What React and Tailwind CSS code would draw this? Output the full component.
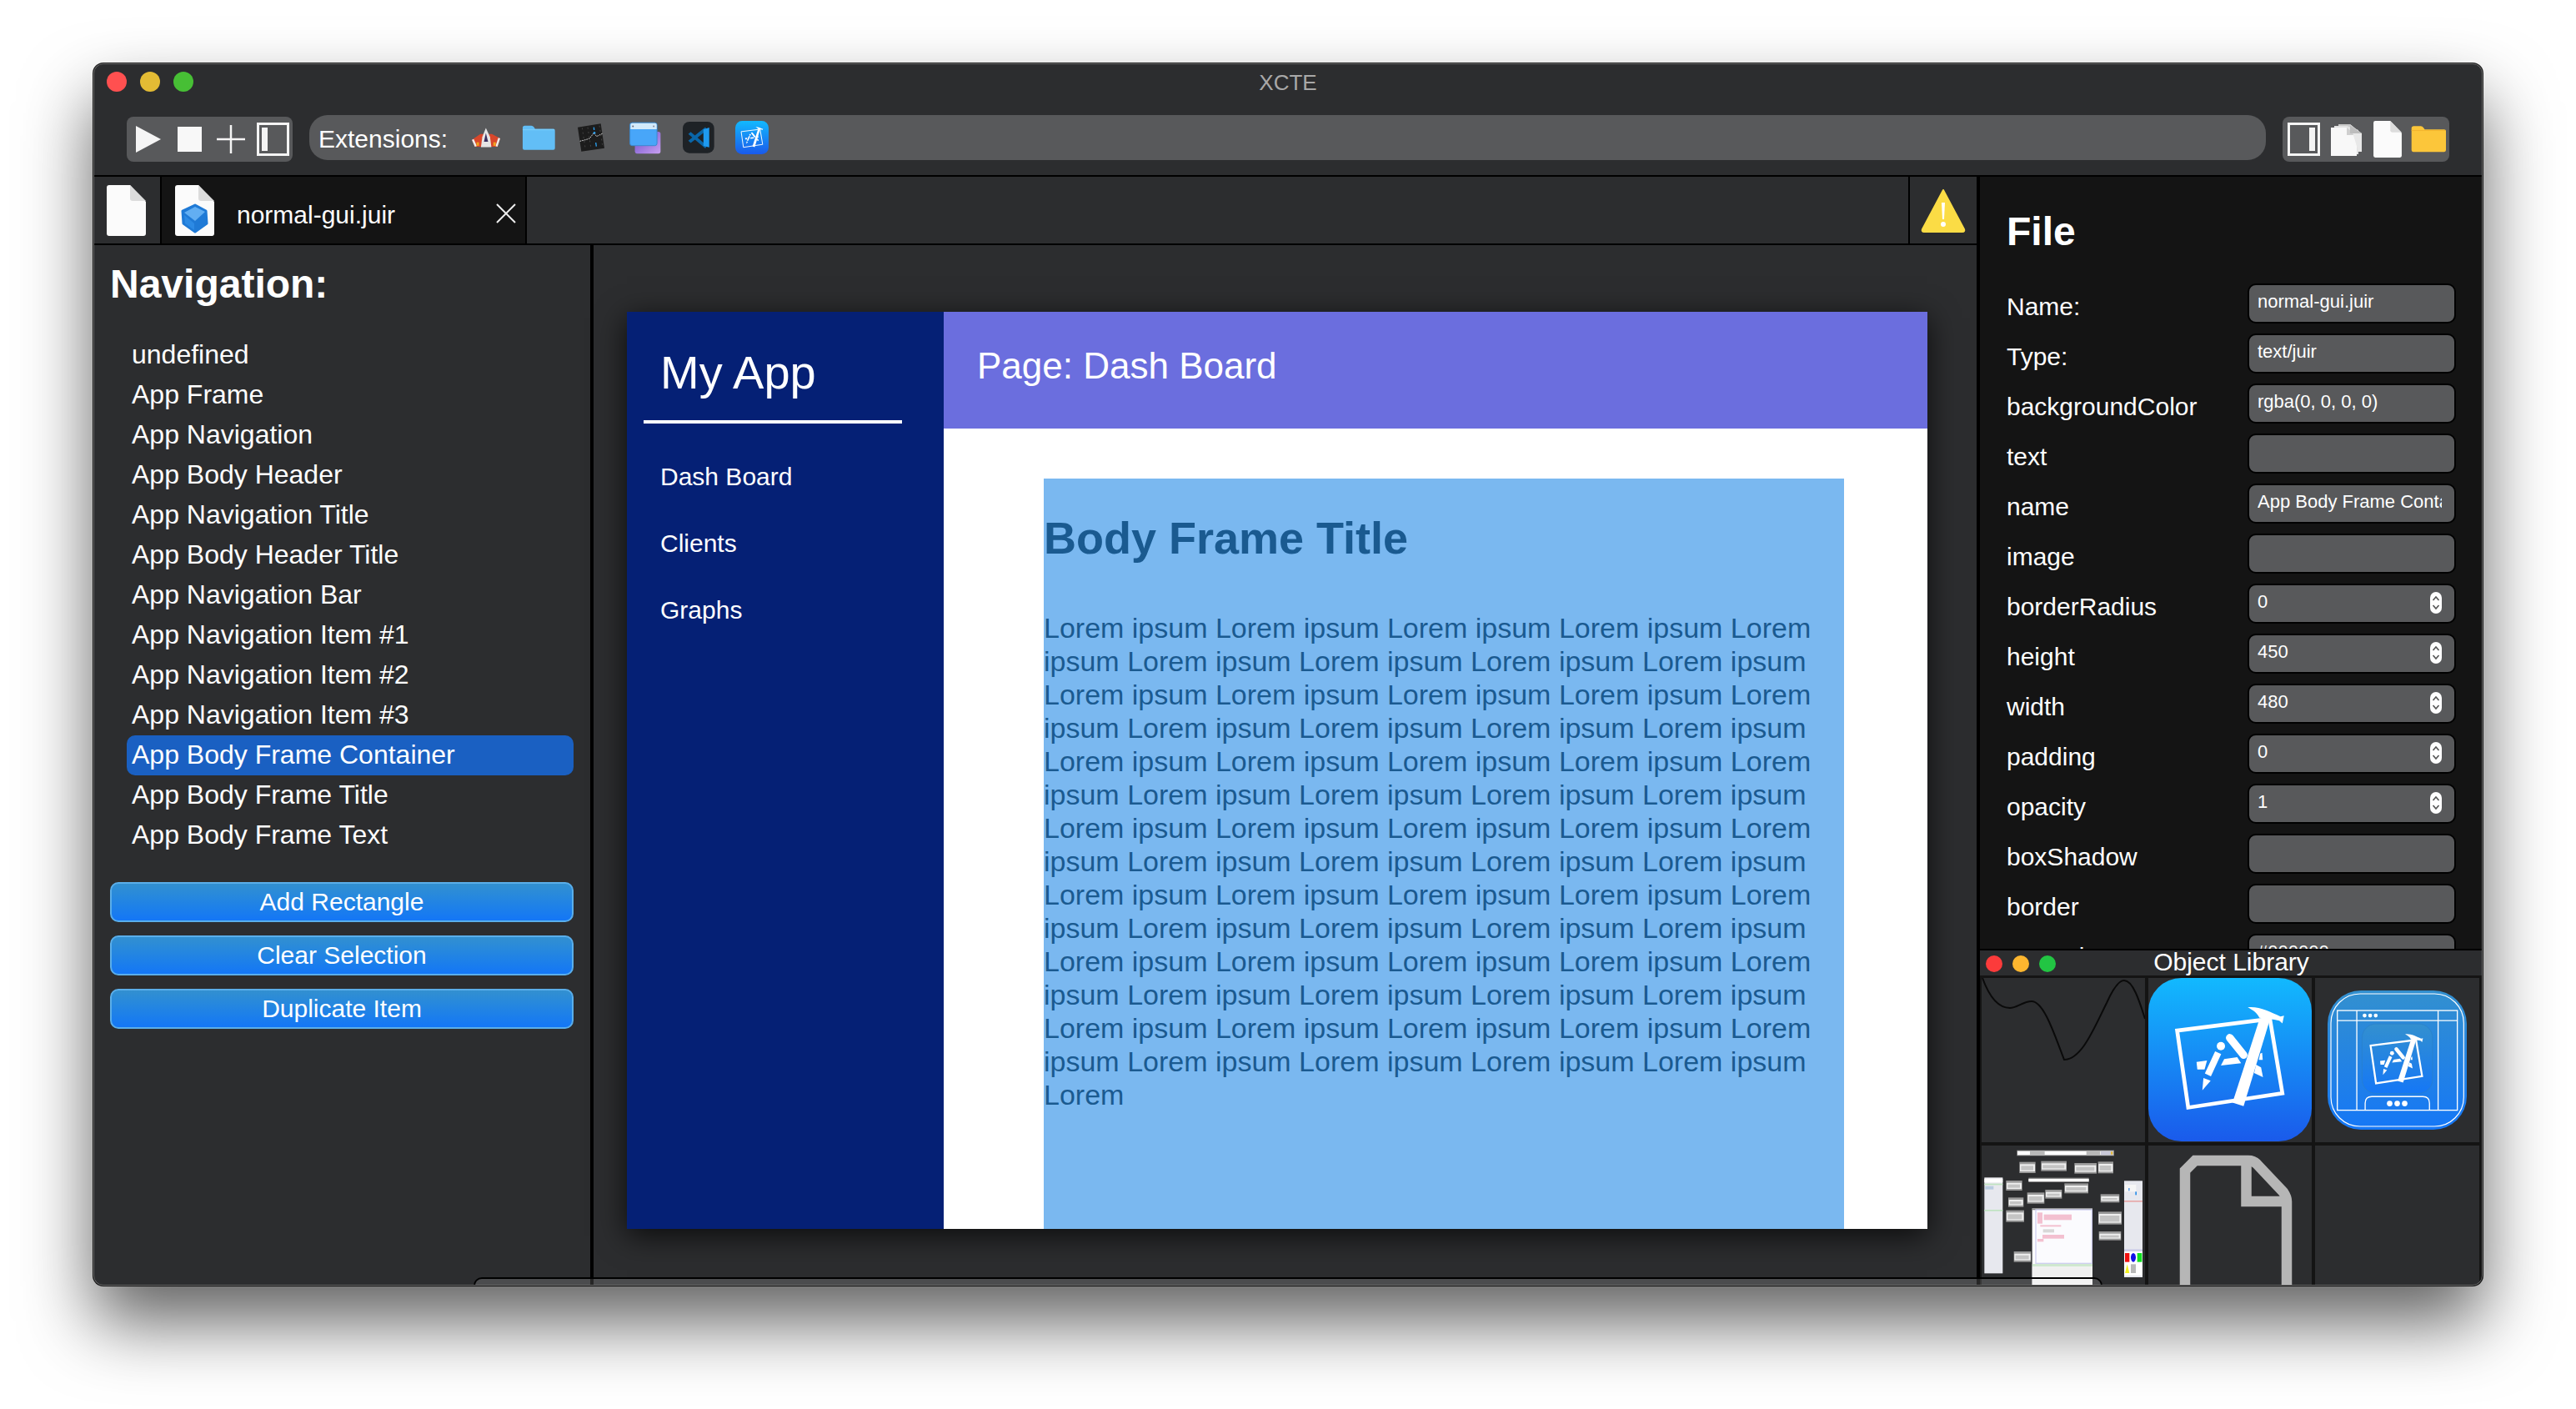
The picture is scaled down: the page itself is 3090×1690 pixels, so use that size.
import React from "react";

const navItems = ["undefined","App Frame","App Navigation","App Body Header","App Navigation Title","App Body Header Title","App Navigation Bar","App Navigation Item #1","App Navigation Item #2","App Navigation Item #3","App Body Frame Container","App Body Frame Title","App Body Frame Text"];
const props = [
  ["Name:","normal-gui.juir"],["Type:","text/juir"],["backgroundColor","rgba(0, 0, 0, 0)"],["text",""],["name","App Body Frame Container"],["image",""],
  ["borderRadius","0",1],["height","450",1],["width","480",1],["padding","0",1],["opacity","1",1],["boxShadow",""],["border",""],["textColor","#000000"],
];
const lorem = Array(63).fill("Lorem ipsum").join(" ") + " Lorem";

function Glyph() {
  return (
    <g fill="white">
      <polygon points="155,232 490,190 535,458 195,510" fill="none" stroke="white" strokeWidth="14" />
      <polygon points="452,192 490,192 395,505 355,492" />
      <path d="M410 148 C450 143 492 165 528 181 L541 178 L535 206 L524 196 C500 190 478 190 452 186 C446 170 430 158 410 148Z" />
      <circle cx="313" cy="288" r="15" />
      <line x1="303" y1="312" x2="266" y2="392" stroke="white" strokeWidth="24" />
      <polygon points="250,403 276,413 246,448" />
      <line x1="345" y1="258" x2="395" y2="320" stroke="white" strokeWidth="28" strokeLinecap="round" />
      <polygon points="225,345 263,340 254,372 228,372" />
      <polygon points="325,335 372,328 386,350 313,358" />
      <polygon points="440,355 458,365 465,400 433,385" />
      <polygon points="455,315 462,312 464,338 450,338" />
    </g>
  );
}

function AppIcon({ size, id, radius = 100 }) {
  return (
    <svg width={size} height={size} viewBox="51 42 590 590" className="block shrink-0">
      <defs>
        <linearGradient id={id} x1="0" y1="0" x2="0" y2="1">
          <stop offset="0" stopColor="#12b9fe" />
          <stop offset="1" stopColor="#1a5aeb" />
        </linearGradient>
      </defs>
      <rect x="51" y="42" width="590" height="590" rx={radius + 20} fill={`url(#${id})`} />
      <Glyph />
    </svg>
  );
}

function AppWindowIcon() {
  return (
    <svg width="167" height="167" viewBox="698 85 500 500" className="block">
      <defs>
        <linearGradient id="awg" x1="0" y1="0" x2="0" y2="1">
          <stop offset="0" stopColor="#3390cf" />
          <stop offset="1" stopColor="#1577f6" />
        </linearGradient>
      </defs>
      <rect x="698" y="85" width="500" height="500" rx="120" fill="url(#awg)" />
      <rect x="710" y="97" width="477" height="476" rx="105" fill="none" stroke="white" strokeWidth="3.5" />
      <rect x="733" y="157" width="431" height="358" fill="none" stroke="white" strokeWidth="4" />
      <line x1="733" y1="193" x2="1164" y2="193" stroke="white" strokeWidth="4" />
      <line x1="803" y1="157" x2="803" y2="515" stroke="white" strokeWidth="4" />
      <line x1="1095" y1="157" x2="1095" y2="515" stroke="white" strokeWidth="4" />
      <circle cx="831" cy="175" r="7" fill="white" /><circle cx="851" cy="175" r="7" fill="white" /><circle cx="871" cy="175" r="7" fill="white" />
      <path d="M833 515 V490 q0 -24 24 -24 H1040 q24 0 24 24 V515" fill="none" stroke="white" strokeWidth="4" />
      <circle cx="921" cy="491" r="10" fill="white" /><circle cx="948" cy="491" r="10" fill="white" /><circle cx="975" cy="491" r="10" fill="white" />
      <rect x="822" y="205" width="253" height="250" rx="50" fill="url(#awg)" stroke="#2a7fc8" strokeWidth="2" />
      <g transform="translate(777 170) scale(0.487)"><Glyph /></g>
    </svg>
  );
}

function FileIcon({ w = 47, h = 61, cube }) {
  return (
    <svg width={w} height={h} viewBox="0 0 47 61" className="block shrink-0">
      <path d="M3 0 H28 L47 20 V58 q0 3 -3 3 H3 q-3 0 -3 -3 V3 q0 -3 3 -3Z" fill="#fbfbfb" />
      <path d="M28 0 V16 q0 3 3 3 H47Z" fill="#dcdcdc" />
      {cube && (
        <g strokeLinejoin="round">
          <polygon points="24,24 37,31 38,46 24,56 10,46 9,31" fill="#1f7ad6" stroke="#1f7ad6" strokeWidth="3" />
          <polygon points="24,26 36,32 24,43 11,33" fill="#62aef2" />
          <polygon points="11,36 23,46 23,54 12,46" fill="#2c8ae4" />
        </g>
      )}
    </svg>
  );
}

function PanelIcon({ right }) {
  return (
    <div className={`w-[39px] h-[40px] border-[3px] border-[#f4f4f4] p-[3px] flex shrink-0 ${right ? "justify-end" : "justify-start"}`}>
      <div className="w-[7px] h-full bg-[#f4f4f4]" />
    </div>
  );
}

function FolderIcon({ w, h, main, top }) {
  return (
    <svg width={w} height={h} viewBox="260 62 122 96" className="block shrink-0">
      <path d="M262 72 q0 -8 8 -8 h24 q6 0 10 6 l4 6 h68 q6 0 6 6 v66 q0 6 -6 6 H268 q-6 0 -6 -6Z" fill={main} />
      <rect x="262" y="78" width="118" height="3" fill={top} />
    </svg>
  );
}

function Rocket() {
  return (
    <svg width="34" height="24" viewBox="77 72 103 70" className="block shrink-0">
      <polygon points="77,115 108,94 150,94 180,110 170,140 88,140" fill="#d9472b" />
      <polygon points="77,115 84,112 95,138 88,140" fill="#eee" />
      <polygon points="180,110 173,108 163,138 170,140" fill="#eee" />
      <polygon points="128,72 115,105 110,142 148,142 143,105" fill="#e6e6e6" />
      <polygon points="128,90 121,122 136,122" fill="#3a3060" />
      <rect x="94" y="124" width="9" height="13" fill="#f2a31f" />
      <rect x="155" y="124" width="9" height="13" fill="#f2a31f" />
    </svg>
  );
}

function Chart() {
  return (
    <svg width="34" height="34" viewBox="460 56 100 102" className="block shrink-0">
      <polygon points="462,70 545,57 558,145 475,157" fill="#1c1c1c" />
      <g stroke="#555" strokeWidth="2" strokeDasharray="6 10">
        <line x1="478" y1="72" x2="490" y2="150" /><line x1="498" y1="70" x2="510" y2="148" /><line x1="540" y1="64" x2="552" y2="142" />
      </g>
      <polyline points="470,120 490,115 505,110 520,90 530,103 552,92" fill="none" stroke="white" strokeWidth="2.5" strokeDasharray="5 3" />
      <line x1="520" y1="70" x2="521" y2="80" stroke="#2aa0f0" strokeWidth="4" />
      <line x1="527" y1="125" x2="529" y2="139" stroke="#2aa0f0" strokeWidth="4" />
      <circle cx="522" cy="90" r="4" fill="#2aa0f0" />
    </svg>
  );
}

function Windows() {
  return (
    <svg width="38" height="39" viewBox="648 50 116 116" className="block shrink-0">
      <defs>
        <linearGradient id="pur" x1="0" y1="0" x2="1" y2="1">
          <stop offset="0" stopColor="#6a4bc8" />
          <stop offset="1" stopColor="#c9a0f2" />
        </linearGradient>
      </defs>
      <rect x="668" y="85" width="94" height="80" rx="8" fill="url(#pur)" />
      <rect x="650" y="52" width="99" height="84" rx="8" fill="#48a6f9" stroke="#3a88cf" strokeWidth="3" />
      <path d="M652 76 V60 q0 -6 6 -6 h84 q6 0 6 6 v16Z" fill="#d2eafb" />
      <circle cx="661" cy="65" r="3" fill="#667" /><circle cx="737" cy="65" r="3" fill="#889" />
    </svg>
  );
}

function VSCode() {
  return (
    <svg width="38" height="38" viewBox="840 50 115 115" className="block shrink-0">
      <rect x="840" y="50" width="114" height="114" rx="24" fill="#1e2226" />
      <polygon points="860,95 869,87 928,137 922,147" fill="#0a66a8" />
      <polygon points="860,119 869,127 928,80 922,70" fill="#0a66a8" />
      <polygon points="915,78 936,71 936,143 915,138" fill="#1e9af0" />
    </svg>
  );
}

function FileStack() {
  return (
    <svg width="39" height="39" viewBox="0 0 39 39" className="block shrink-0">
      <path d="M10 1 H24 L34 11 V36 H10Z" fill="#c9c9c9" />
      <path d="M5 3 H20 L34 8 V37 H5Z" fill="#e2e2e2" />
      <path d="M1 5 H20 L32 14 V39 H1Z" fill="#f8f8f8" />
      <path d="M20 5 V14 H32Z" fill="#cfcfcf" />
      <path d="M24 1 L38 12 V34 H34" fill="#e8e8e8" />
      <path d="M24 2 V12 H38Z" fill="#bdbdbd" />
    </svg>
  );
}

function Warning() {
  return (
    <svg width="54" height="53" viewBox="0 0 54 53" className="block">
      <path d="M27 2 L52 49 q1 3 -2 3 H4 q-3 0 -2 -3Z" fill="#fbdc45" stroke="#fbdc45" strokeWidth="2" strokeLinejoin="round" />
      <path d="M25 17 h4 l-1 20 h-2Z" fill="white" />
      <circle cx="27" cy="43" r="3" fill="white" />
    </svg>
  );
}

function Spinner() {
  return (
    <svg width="14" height="26" viewBox="0 0 14 26" className="block shrink-0">
      <rect width="14" height="26" rx="7" fill="white" />
      <path d="M3.5 10 L7 6 L10.5 10 M3.5 16 L7 20 L10.5 16" fill="none" stroke="#555" strokeWidth="1.6" />
    </svg>
  );
}

function Thumb() {
  const boxes = [[157,68,58,40],[235,65,92,36],[355,72,80,38],[440,67,55,42],[109,135,58,36],[117,196,55,34],[185,178,62,40],[250,168,60,32],[319,145,86,36],[109,242,65,42],[449,184,68,30],[441,247,84,46],[443,318,80,32],[137,390,62,38]];
  return (
    <svg width="197" height="167" viewBox="21 9 591 501" className="block">
      <rect x="148" y="26" width="350" height="20" fill="#8d8d8d" />
      <rect x="150" y="29" width="345" height="14" fill="white" />
      <rect x="195" y="29" width="53" height="14" fill="#b9b9b9" />
      <rect x="398" y="29" width="50" height="14" fill="#b9b9b9" />
      <rect x="450" y="29" width="45" height="14" fill="#c8c8d8" />
      <rect x="486" y="31" width="7" height="10" fill="#e5b93a" />
      {boxes.map(([x, y, w, h], i) => (
        <g key={i}>
          <rect x={x} y={y} width={w} height={h} fill="#9a9a9a" />
          <rect x={x + 2} y={y + 8} width={w - 4} height={h - 14} fill="#eeeeee" />
          <rect x={x + 6} y={y + 14} width={w - 14} height={h - 24} fill="#c4c4c4" />
        </g>
      ))}
      <rect x="190" y="125" width="217" height="16" fill="#8f8f8f" />
      <rect x="190" y="129" width="217" height="9" fill="white" />
      <rect x="31" y="124" width="66" height="345" fill="#e7e8ee" />
      <rect x="31" y="128" width="66" height="14" fill="white" />
      <rect x="31" y="146" width="66" height="5" fill="#bfe3c0" />
      <rect x="34" y="155" width="30" height="12" fill="#b8cbe0" />
      <rect x="31" y="240" width="66" height="5" fill="#bfe3c0" />
      <rect x="534" y="136" width="66" height="347" fill="#e7e8ee" />
      <rect x="537" y="150" width="40" height="25" fill="#f6f6f6" />
      <rect x="574" y="175" width="5" height="12" fill="#2a8ee8" />
      <rect x="549" y="162" width="5" height="10" fill="#6aa8ea" />
      <rect x="534" y="207" width="66" height="5" fill="#e8a8a8" />
      <rect x="534" y="382" width="66" height="8" fill="#cdcde8" />
      <rect x="534" y="390" width="66" height="86" fill="white" />
      <rect x="537" y="396" width="16" height="32" fill="#f01010" />
      <ellipse cx="567" cy="412" rx="9" ry="16" fill="#1010e8" />
      <rect x="581" y="396" width="17" height="32" fill="#10e020" />
      <polygon points="545,436 537,468 553,468" fill="#f2f020" />
      <rect x="558" y="436" width="18" height="32" fill="#b8b8b8" />
      <rect x="203" y="235" width="217" height="275" fill="white" />
      <rect x="203" y="235" width="217" height="6" fill="#8a8a8a" />
      <rect x="216" y="240" width="202" height="193" fill="#fbfbfe" stroke="#cfcff0" strokeWidth="4" />
      <g fill="#f3c0d0">
        <rect x="245" y="257" width="100" height="20" />
        <rect x="222" y="250" width="18" height="40" />
        <rect x="232" y="295" width="75" height="6" />
        <rect x="240" y="330" width="78" height="14" />
        <rect x="222" y="345" width="22" height="10" />
      </g>
      <rect x="242" y="310" width="40" height="12" fill="#d8d8d8" />
      <rect x="203" y="435" width="217" height="10" fill="#cfe8cf" />
      <rect x="203" y="445" width="217" height="65" fill="#f0f0f0" />
    </svg>
  );
}

function LibCell({ children, className = "" }) {
  return <div className={`bg-[#2c2d2f] overflow-hidden relative ${className}`}>{children}</div>;
}

export default function App() {
  return (
    <div className="w-[3090px] h-[1690px] bg-white pt-[76px] pl-[112px] overflow-hidden font-['Liberation_Sans',Arial,sans-serif] text-white">
      <div className="relative w-[2866px] h-[1466px] rounded-[12px] bg-[#2c2d2f] flex flex-col overflow-hidden shadow-[0_44px_84px_rgba(0,0,0,0.62),0_0_0_1px_#222]">
        {/* title bar */}
        <div className="relative h-[44px] shrink-0 flex items-center pl-[16px] gap-[16px]">
          <div className="w-[24px] h-[24px] rounded-full bg-[#ff5050]" />
          <div className="w-[24px] h-[24px] rounded-full bg-[#e3bb34]" />
          <div className="w-[24px] h-[24px] rounded-full bg-[#47bf35]" />
          <div className="absolute inset-0 flex items-center justify-center text-[26px] text-[#a8a8a8] leading-none translate-y-[1px]">XCTE</div>
        </div>
        {/* toolbar */}
        <div className="h-[92px] shrink-0 flex items-start px-[40px] pt-[18px] gap-[20px] border-b-2 border-black">
          <div className="mt-[2px] w-[199px] h-[54px] rounded-[8px] bg-[#58595b] flex items-center pl-[11px] shrink-0">
            <svg width="30" height="32" viewBox="0 0 30 32" className="block shrink-0"><polygon points="0,0 30,16 0,32" fill="#f5f5f5" /></svg>
            <div className="ml-[20px] w-[29px] h-[30px] bg-[#f8f8f8] shrink-0" />
            <svg width="34" height="34" viewBox="0 0 34 34" className="block ml-[18px] shrink-0"><path d="M17 0 V34 M0 17 H34" stroke="#f5f5f5" strokeWidth="2.5" /></svg>
            <div className="ml-[14px]"><PanelIcon /></div>
          </div>
          <div className="flex-1 h-[54px] rounded-[22px] bg-[#58595b] flex items-center pl-[11px]">
            <span className="text-[30px] leading-none w-[155px] shrink-0 mt-[3px]">Extensions:</span>
            <div className="ml-[29px]"><Rocket /></div>
            <div className="ml-[26px]"><FolderIcon w={40} h={31} main="#62bef6" top="#7fd0fa" /></div>
            <div className="ml-[26px]"><Chart /></div>
            <div className="ml-[29px]"><Windows /></div>
            <div className="ml-[26px]"><VSCode /></div>
            <div className="ml-[25px]"><AppIcon size={40} id="appsm" /></div>
          </div>
          <div className="mt-[2px] w-[200px] h-[54px] rounded-[8px] bg-[#58595b] flex items-center pl-[6px] shrink-0">
            <PanelIcon right />
            <div className="ml-[12px]"><FileStack /></div>
            <div className="ml-[13px]"><FileIcon w={34} h={44} /></div>
            <div className="ml-[11px]"><FolderIcon w={42} h={34} main="#fcc63a" top="#f3b52e" /></div>
          </div>
        </div>
        {/* main */}
        <div className="flex-1 flex min-h-0">
          <div className="w-[2259px] shrink-0 flex flex-col min-h-0">
            <div className="h-[82px] shrink-0 flex border-b-2 border-black">
              <div className="w-[82px] flex items-center pl-[16px] border-r-2 border-black shrink-0"><FileIcon /></div>
              <div className="w-[438px] flex items-center pl-[16px] bg-[#141414] border-r-2 border-black shrink-0">
                <FileIcon cube />
                <span className="ml-[27px] mt-[12px] text-[30px] leading-none">normal-gui.juir</span>
                <svg width="24" height="24" viewBox="0 0 24 24" className="block ml-auto mr-[11px] mt-[8px]"><path d="M1 1 L23 23 M23 1 L1 23" stroke="#eee" strokeWidth="2" /></svg>
              </div>
              <div className="flex-1" />
              <div className="w-[82px] flex items-center justify-center border-l-2 border-black shrink-0"><Warning /></div>
            </div>
            <div className="flex-1 flex min-h-0">
              {/* navigation */}
              <div className="w-[600px] shrink-0 border-r-4 border-black">
                <h2 className="ml-[20px] mt-[20px] h-[54px] text-[48px] font-bold leading-[54px]">Navigation:</h2>
                <ul className="mt-[34px] ml-[40px] w-[536px]">
                  {navItems.map((n, i) => (
                    <li key={i} className={`h-[48px] pl-[6px] text-[32px] leading-[47px] rounded-[10px] whitespace-nowrap ${n === "App Body Frame Container" ? "bg-[#1a60c2]" : ""}`}>{n}</li>
                  ))}
                </ul>
                <div className="mt-[32px] ml-[20px] w-[556px] flex flex-col gap-[16px]">
                  {["Add Rectangle","Clear Selection","Duplicate Item"].map((b) => (
                    <button key={b} className="h-[48px] rounded-[10px] border-2 border-[#5aaeea] bg-gradient-to-b from-[#3290d0] to-[#1476f6] text-[30px] leading-none text-white">{b}</button>
                  ))}
                </div>
              </div>
              {/* canvas */}
              <div className="flex-1 pl-[40px] pt-[80px] min-w-0">
                <div className="w-[1560px] h-[1100px] flex shadow-[0_8px_34px_rgba(0,0,0,0.75)]">
                  <div className="w-[380px] h-full bg-[#052075] shrink-0">
                    <div className="ml-[20px] w-[310px] h-[134px] border-b-4 border-white pl-[20px] pt-[40px] text-[56px] leading-[66px]">My App</div>
                    <div className="pl-[40px] pt-[44px] flex flex-col gap-[40px] text-[30px] leading-[40px]">
                      <div>Dash Board</div><div>Clients</div><div>Graphs</div>
                    </div>
                  </div>
                  <div className="flex-1 bg-white flex flex-col min-w-0">
                    <div className="h-[140px] bg-[#6b6ede] pl-[40px] pt-[36px] text-[44px] leading-[58px]">Page: Dash Board</div>
                    <div className="flex-1 pl-[120px] pt-[60px] overflow-hidden">
                      <div className="w-[960px] h-[900px] bg-[#7ab8f0] text-[#1a5a90] overflow-hidden">
                        <h1 className="mt-[43px] text-[54px] font-bold leading-[56px]">Body Frame Title</h1>
                        <p className="mt-[60px] text-[34px] leading-[40px]">{lorem}</p>
                      </div>
                    </div>
                  </div>
                </div>
              </div>
            </div>
          </div>
          {/* right panel */}
          <div className="flex-1 border-l-4 border-black bg-[#141414] flex flex-col min-w-0">
            <div className="h-[926px] shrink-0 overflow-hidden pl-[32px]">
              <h2 className="mt-[36px] h-[60px] text-[48px] font-bold leading-[60px]">File</h2>
              <div className="mt-[26px]">
                {props.map(([k, v, num], i) => (
                  <div key={i} className="h-[60px] flex items-start">
                    <span className="w-[289px] shrink-0 mt-[14px] text-[30px] leading-[40px] whitespace-nowrap">{k}</span>
                    <div className="mt-[6px] w-[250px] h-[48px] rounded-[10px] border-2 border-black bg-[#58595b] pl-[10px] pr-[15px] flex items-start overflow-hidden shrink-0">
                      <span className="flex-1 min-w-0 overflow-hidden whitespace-nowrap text-[22px] leading-[32px] mt-[4px]">{v}</span>
                      {num && <div className="mt-[8px]"><Spinner /></div>}
                    </div>
                  </div>
                ))}
              </div>
            </div>
            {/* object library */}
            <div className="flex-1 min-h-0 border-t-2 border-black flex flex-col bg-[#141414]">
              <div className="relative h-[30px] shrink-0 bg-[#2c2d2f] flex items-center pl-[7px] pt-[2px] gap-[12px]">
                <div className="w-[20px] h-[20px] rounded-full bg-[#fc3b3b]" />
                <div className="w-[20px] h-[20px] rounded-full bg-[#fdb62f]" />
                <div className="w-[20px] h-[20px] rounded-full bg-[#22c543]" />
                <div className="absolute inset-0 flex items-center justify-center text-[30px] leading-none -translate-y-[1px]">Object Library</div>
              </div>
              <div className="flex-1 min-h-0 mt-[3px] pl-[2px] pr-[3px] grid grid-cols-[196px_196px_197px] grid-rows-[197px_167px] gap-x-[4px] gap-y-[4px]">
                <LibCell>
                  <svg width="196" height="197" viewBox="0 0 196 197" className="block">
                    <path d="M1 0 C10 25 22 36 34 36 C42 36 50 28 60 28 C75 28 88 70 99 98 C120 98 135 60 150 30 C158 12 165 3 171 3 C182 3 190 30 196 49" fill="none" stroke="#0a0a0a" strokeWidth="2" />
                  </svg>
                </LibCell>
                <LibCell><AppIcon size={196} id="appbig" /></LibCell>
                <LibCell className="flex items-center justify-center"><AppWindowIcon /></LibCell>
                <LibCell><Thumb /></LibCell>
                <LibCell>
                  <svg width="196" height="167" viewBox="0 0 196 167" className="block">
                    <path d="M44 175 V30 L56 18 H120 Q126 18 130 22 L162 56 Q166 62 166 67 V175" fill="none" stroke="#b6b6b6" strokeWidth="12.5" />
                    <path d="M117.5 18 V67 H166" fill="none" stroke="#b6b6b6" strokeWidth="12.5" />
                  </svg>
                </LibCell>
                <LibCell />
              </div>
            </div>
          </div>
        </div>
        {/* dock sliver at the bottom edge */}
        <div className="absolute left-[456px] bottom-0 w-[1954px] h-[10px] rounded-t-[14px] border-2 border-b-0 border-black bg-white/15 pointer-events-none" />
        {/* window edge highlight */}
        <div className="absolute inset-0 rounded-[12px] border border-[#6a6a6a] pointer-events-none" />
      </div>
    </div>
  );
}
